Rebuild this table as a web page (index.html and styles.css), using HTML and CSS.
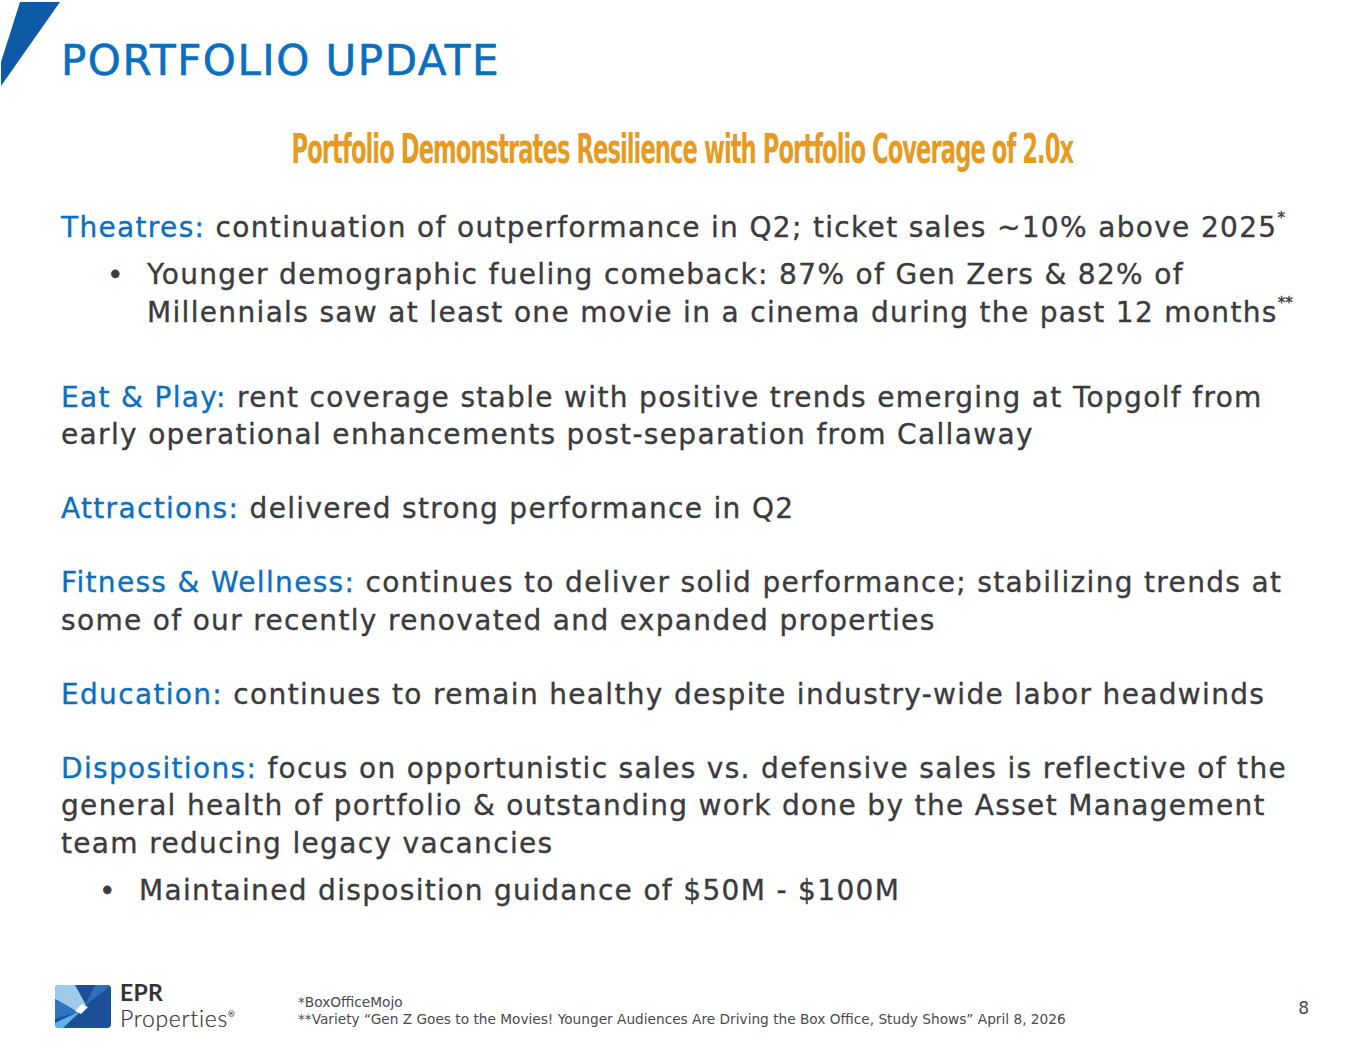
FILE: index.html
```html
<!DOCTYPE html>
<html lang="en">
<head>
<meta charset="utf-8">
<title>Portfolio Update</title>
<link rel="stylesheet" href="styles.css">
</head>
<body>
<div class="slide">
  <header class="header">
    <svg class="slash" width="62" height="88" viewBox="0 0 62 88" aria-hidden="true">
      <polygon points="20,2 60,2 1,86 1,62" fill="#0d5aa7"/>
    </svg>
    <h1 class="title">PORTFOLIO UPDATE</h1>
  </header>

  <h2 class="subtitle"><span class="subtitle-text">Portfolio Demonstrates Resilience with Portfolio Coverage of 2.0x</span></h2>

  <main class="content">
    <section class="item item-first">
      <p class="para"><span class="label">Theatres:</span> continuation of outperformance in Q2; ticket sales ~10% above 2025<sup class="note">*</sup></p>
      <ul class="bullets bullets-a">
        <li>Younger demographic fueling comeback: 87% of Gen Zers &amp; 82% of<br>Millennials saw at least one movie in a cinema during the past 12 months<sup class="note">**</sup></li>
      </ul>
    </section>

    <section class="item item-after-bullets">
      <p class="para"><span class="label">Eat &amp; Play:</span> rent coverage stable with positive trends emerging at Topgolf from<br>early operational enhancements post-separation from Callaway</p>
    </section>

    <section class="item">
      <p class="para"><span class="label">Attractions:</span> delivered strong performance in Q2</p>
    </section>

    <section class="item">
      <p class="para"><span class="label">Fitness &amp; Wellness:</span> continues to deliver solid performance; stabilizing trends at<br>some of our recently renovated and expanded properties</p>
    </section>

    <section class="item">
      <p class="para"><span class="label">Education:</span> continues to remain healthy despite industry-wide labor headwinds</p>
    </section>

    <section class="item">
      <p class="para"><span class="label">Dispositions:</span> focus on opportunistic sales vs. defensive sales is reflective of the<br>general health of portfolio &amp; outstanding work done by the Asset Management<br>team reducing legacy vacancies</p>
      <ul class="bullets bullets-b">
        <li>Maintained disposition guidance of $50M - $100M</li>
      </ul>
    </section>
  </main>

  <footer class="footer">
    <div class="logo">
      <svg class="logo-mark" width="56" height="43" viewBox="0 0 56 43" aria-hidden="true">
        <defs>
          <clipPath id="lc"><rect x="0" y="0" width="56" height="43" rx="4" ry="4"/></clipPath>
        </defs>
        <g clip-path="url(#lc)">
          <rect x="0" y="0" width="56" height="43" fill="#1b4f97"/>
          <polygon points="0,0 20,0 31,20 23,27 0,14" fill="#9fcbea"/>
          <polygon points="0,14 23,27 0,34" fill="#2f76bf"/>
          <polygon points="23,27 28,24 8,43 0,43 0,38" fill="#5db4e6"/>
          <polygon points="40,0 56,0 30,21" fill="#2f6fb8"/>
          <polygon points="20,26 27,19 33,22 26,29" fill="#ffffff"/>
        </g>
      </svg>
      <div class="logo-text">
        <span class="logo-epr">EPR</span>
        <span class="logo-prop">Properties<sup class="reg">®</sup></span>
      </div>
    </div>
    <div class="footnotes">
      <p>*BoxOfficeMojo</p>
      <p>**Variety “Gen Z Goes to the Movies! Younger Audiences Are Driving the Box Office, Study Shows” April 8, 2026</p>
    </div>
    <div class="page-num">8</div>
  </footer>
</div>
</body>
</html>
```

FILE: styles.css
```css
* { box-sizing: border-box; }

html, body {
  margin: 0;
  padding: 0;
  background: #ffffff;
}

body {
  font-family: "DejaVu Sans", "Noto Sans", sans-serif;
  color: #3b3b3d;
}

.slide {
  width: 1365px;
  height: 1055px;
  display: flex;
  flex-direction: column;
}

.header {
  display: flex;
  align-items: flex-start;
  height: 88px;
}

.slash {
  display: block;
  flex: none;
}

.title {
  margin: 36px 0 0 -1px;
  font-size: 42px;
  font-weight: 500;
  line-height: 50px;
  color: #0b6fc0;
  letter-spacing: 1.5px;
  -webkit-text-stroke: 0.6px #0b6fc0;
}

.subtitle {
  margin: 38px 0 0 0;
  text-align: center;
  line-height: 46px;
  font-size: 40px;
  font-weight: 700;
}

.subtitle-text {
  display: inline-block;
  font-family: "Liberation Sans Narrow", "DejaVu Sans Condensed", sans-serif;
  color: #e59a22;
  letter-spacing: -1.5px;
  transform: scaleX(0.63);
}

.content {
  padding-left: 61px;
  margin-top: 37px;
  font-size: 28px;
  line-height: 37.5px;
  letter-spacing: 1.33px;
  -webkit-text-stroke: 0.35px currentColor;
}

.para {
  margin: 0;
}

.item + .item {
  margin-top: 36.5px;
}

.item.item-after-bullets {
  margin-top: 47.5px;
}

.label {
  color: #0b6fc0;
}

.note {
  font-size: 15px;
  line-height: 0;
  vertical-align: 14px;
  letter-spacing: 0;
}

.bullets {
  list-style: none;
  margin: 9.5px 0 0 0;
  padding: 0;
}

.bullets li {
  position: relative;
}

.bullets li::before {
  content: "•";
  position: absolute;
}

.bullets-a li {
  padding-left: 86px;
}

.bullets-a li::before {
  left: 46px;
}

.bullets-b li {
  padding-left: 78px;
}

.bullets-b li::before {
  left: 38px;
}

.footer {
  margin-top: auto;
  display: flex;
  align-items: flex-end;
  padding: 0 56px 27px 55px;
}

.logo {
  display: flex;
  align-items: center;
  gap: 9px;
  width: 243px;
  margin-bottom: -4px;
}

.logo-mark {
  display: block;
}

.logo-text {
  display: flex;
  flex-direction: column;
  color: #333335;
  font-family: "Lato", "Open Sans", sans-serif;
}

.logo-epr {
  font-weight: 700;
  font-size: 23px;
  line-height: 25px;
  letter-spacing: 0.3px;
}

.logo-prop {
  font-size: 23px;
  line-height: 27px;
  font-weight: 300;
  letter-spacing: 0.7px;
  -webkit-text-stroke: 0.2px #333335;
}

.reg {
  font-size: 8px;
  vertical-align: 10px;
  line-height: 0;
}

.footnotes {
  flex: 1;
  font-family: "DejaVu Sans", sans-serif;
  font-size: 13.7px;
  line-height: 17px;
  color: #4a4a4c;
}

.footnotes p {
  margin: 0;
}

.page-num {
  font-family: "DejaVu Sans", sans-serif;
  font-size: 17px;
  color: #4a4a4c;
  padding-bottom: 10px;
}
```
